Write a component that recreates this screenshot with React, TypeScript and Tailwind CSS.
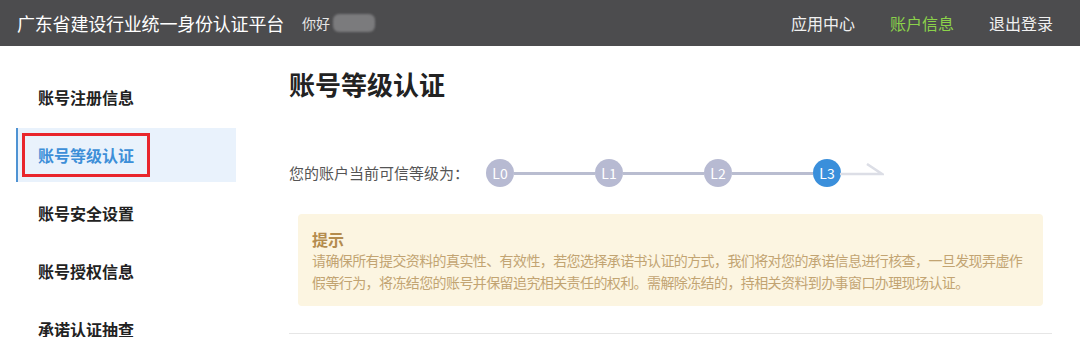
const menu = ["账号注册信息", "账号等级认证", "账号安全设置", "账号授权信息", "承诺认证抽查"];
const levels = ["L0", "L1", "L2", "L3"];

export default function App() {
  return (
    <div
      className="w-[1080px] h-[337px] overflow-hidden bg-white"
      style={{ fontFamily: '"Noto Sans CJK SC", "Noto Sans", sans-serif' }}
    >
      {/* top bar */}
      <div className="h-[46px] bg-[#4c4c4e] flex items-center pl-[17px] pr-[27px]">
        <span className="text-[18px] text-white tracking-[-0.2px]">广东省建设行业统一身份认证平台</span>
        <span className="ml-[18px] text-[14px] text-[#e6e6e6]">你好</span>
        <span className="ml-[3px] w-[42px] h-[18px] rounded-[6px] bg-[#7b7b7d] blur-[1px]"></span>
        <div className="ml-auto flex items-center gap-[35px] text-[16px]">
          <span className="text-[#f0f0f0]">应用中心</span>
          <span className="text-[#8bd24a]">账户信息</span>
          <span className="text-[#f0f0f0]">退出登录</span>
        </div>
      </div>

      <div className="flex">
        {/* side menu */}
        <div className="w-[236px] pl-4 pt-[22px] shrink-0">
          {menu.map((item, i) =>
            i === 1 ? (
              <div
                key={item}
                className="h-[54px] my-[2px] bg-[#e9f2fc] border-l-2 border-[#4f93d3] flex items-center pl-[4px]"
              >
                <span className="h-[44px] flex items-center border-[3px] border-[#e9262c] px-[13px] text-[16px] font-bold text-[#3d8fd8]">
                  {item}
                </span>
              </div>
            ) : (
              <div key={item} className="h-[58px] flex items-center pl-[22px] text-[16px] font-bold text-[#222]">
                {item}
              </div>
            )
          )}
        </div>

        {/* main */}
        <div className="ml-[53px] w-[763px] pt-[20px]">
          <h1 className="text-[26px] leading-[36px] font-bold text-[#222]">账号等级认证</h1>

          <div className="mt-[57px] flex items-center h-[28px]">
            <span className="text-[15px] text-[#555] w-[197px] whitespace-pre">您的账户当前可信等级为： </span>
            {levels.map((lv, i) => (
              <div key={lv} className="flex items-center">
                {i > 0 && <div className="w-[81px] h-[3px] bg-[#b9bdd0]"></div>}
                <div
                  className={
                    "w-[28px] h-[28px] rounded-full flex items-center justify-center text-[14px] text-white " +
                    (i === 3 ? "bg-[#3a8fdb]" : "bg-[#b7bad2]")
                  }
                >
                  {lv}
                </div>
              </div>
            ))}
            <svg width="44" height="20" viewBox="0 0 44 20" className="-ml-[1px]">
              <path d="M0 11 H42 L27 1" fill="none" stroke="#dcdee6" strokeWidth="2.5" />
            </svg>
          </div>

          <div className="mt-[27px] mx-[9px] rounded-[4px] bg-[#fcf5e1] pt-[15px] pb-[13px] px-[14px]">
            <div className="text-[16px] leading-[20px] font-bold text-[#b48c4e]">提示</div>
            <div className="text-[14px] leading-[22px] text-[#c2a472] tracking-[-0.6px]">
              <div className="whitespace-nowrap">
                请确保所有提交资料的真实性、有效性，若您选择承诺书认证的方式，我们将对您的承诺信息进行核查，一旦发现弄虚作
              </div>
              <div className="whitespace-nowrap">
                假等行为，将冻结您的账号并保留追究相关责任的权利。需解除冻结的，持相关资料到办事窗口办理现场认证。
              </div>
            </div>
          </div>

          <div className="mt-[27px] h-px bg-[#e6e6e6]"></div>
        </div>
      </div>
    </div>
  );
}
